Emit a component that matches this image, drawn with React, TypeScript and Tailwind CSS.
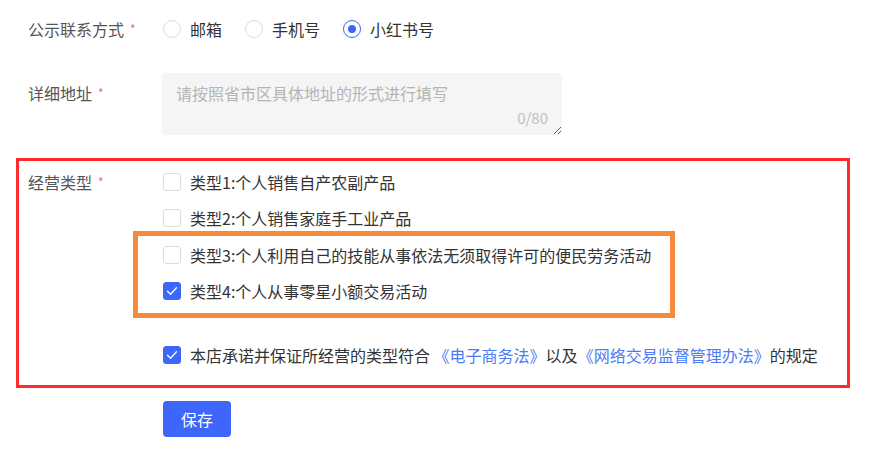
import { useState } from 'react';

const font = { fontFamily: '"Noto Sans CJK SC", "Noto Sans", sans-serif' };

const businessTypes = [
  '类型1:个人销售自产农副产品',
  '类型2:个人销售家庭手工业产品',
  '类型3:个人利用自己的技能从事依法无须取得许可的便民劳务活动',
  '类型4:个人从事零星小额交易活动',
];

function Label({ text }: { text: string }) {
  return (
    <div className="flex w-[135px] shrink-0 items-center text-[16px] leading-[24px] text-[#555]">
      <span>{text}</span>
      <span className="ml-[6px] text-[12px] text-[#f56c6c]">*</span>
    </div>
  );
}

function Radio({
  checked,
  label,
  onClick,
}: {
  checked: boolean;
  label: string;
  onClick: () => void;
}) {
  return (
    <button className="flex items-center gap-[9px]" type="button" onClick={onClick}>
      <span
        className={`flex h-[18px] w-[18px] items-center justify-center rounded-full border ${
          checked ? 'border-[#3e66fb]' : 'border-[#dcdcdc]'
        }`}
      >
        {checked && <span className="h-[8px] w-[8px] rounded-full bg-[#3e66fb]" />}
      </span>
      <span className="text-[16px] leading-[24px] text-[#333]">{label}</span>
    </button>
  );
}

function Checkbox({
  checked,
  onClick,
  children,
}: {
  checked: boolean;
  onClick: () => void;
  children: React.ReactNode;
}) {
  return (
    <div className="flex h-[24px] items-center gap-[9px]">
      <button
        className={`flex h-[18px] w-[18px] shrink-0 items-center justify-center rounded-[3px] border ${
          checked ? 'border-[#3e66fb] bg-[#3e66fb]' : 'border-[#dcdcdc] bg-white'
        }`}
        type="button"
        onClick={onClick}
      >
        {checked && (
          <svg fill="none" height="10" viewBox="0 0 12 10" width="12">
            <path d="M1.5 5.2 4.6 8.2 10.5 1.8" stroke="white" strokeLinecap="round" strokeWidth="1.3" />
          </svg>
        )}
      </button>
      <span className="whitespace-nowrap text-[16px] leading-[24px] text-[#333]">{children}</span>
    </div>
  );
}

export default function App() {
  const [contact, setContact] = useState('xhs');
  const [types, setTypes] = useState([false, false, false, true]);
  const [agreed, setAgreed] = useState(true);

  const toggleType = (index: number) => {
    setTypes((prev) => prev.map((v, i) => (i === index ? !v : v)));
  };

  return (
    <div className="min-h-[471px] w-[883px] bg-white" style={font}>
      {/* 公示联系方式 */}
      <div className="box-content flex h-[32px] items-center pl-[28px] pt-[13px]">
        <Label text="公示联系方式" />
        <div className="flex items-center gap-[23px]">
          <Radio checked={contact === 'email'} label="邮箱" onClick={() => setContact('email')} />
          <Radio checked={contact === 'phone'} label="手机号" onClick={() => setContact('phone')} />
          <Radio checked={contact === 'xhs'} label="小红书号" onClick={() => setContact('xhs')} />
        </div>
      </div>

      {/* 详细地址 */}
      <div className="mt-[28px] flex items-start pl-[28px]">
        <div className="pt-[8px]">
          <Label text="详细地址" />
        </div>
        <div className="relative -ml-px">
          <textarea
            className="block h-[62px] w-[400px] rounded-[4px] bg-[#f5f5f5] px-[14px] pt-[8px] text-[16px] leading-[24px] text-[#333] outline-none placeholder:text-[#b4b4b4]"
            placeholder="请按照省市区具体地址的形式进行填写"
            style={font}
          />
          <span className="pointer-events-none absolute bottom-[5px] right-[14px] text-[15px] leading-[24px] text-[#c0c0c0]">
            0/80
          </span>
        </div>
      </div>

      {/* 经营类型 */}
      <div className="ml-[16px] mt-[23px] w-[834px] border-[3px] border-[#ff2a2a] pb-[18px] pl-[9px] pt-[9px]">
        <div className="flex items-start">
          <Label text="经营类型" />
          <div className="flex flex-col">
            <Checkbox checked={types[0]} onClick={() => toggleType(0)}>
              {businessTypes[0]}
            </Checkbox>
            <div className="mt-[12px]">
              <Checkbox checked={types[1]} onClick={() => toggleType(1)}>
                {businessTypes[1]}
              </Checkbox>
            </div>
            <div className="-ml-[30px] mt-[1px] flex w-[542px] flex-col gap-[12px] border-[5px] border-[#f7893b] pb-[10px] pl-[25px] pt-[7px]">
              <Checkbox checked={types[2]} onClick={() => toggleType(2)}>
                {businessTypes[2]}
              </Checkbox>
              <Checkbox checked={types[3]} onClick={() => toggleType(3)}>
                {businessTypes[3]}
              </Checkbox>
            </div>
            <div className="mt-[25px]">
              <Checkbox checked={agreed} onClick={() => setAgreed(!agreed)}>
                本店承诺并保证所经营的类型符合 <span className="text-[#4b7bf5]">《电子商务法》</span>以及
                <span className="text-[#4b7bf5]">《网络交易监督管理办法》</span>的规定
              </Checkbox>
            </div>
          </div>
        </div>
      </div>

      <div className="pl-[163px] pt-[13px]">
        <button
          className="h-[36px] w-[68px] rounded-[4px] bg-[#3e66fb] text-[16px] text-white"
          type="button"
        >
          保存
        </button>
      </div>
    </div>
  );
}
